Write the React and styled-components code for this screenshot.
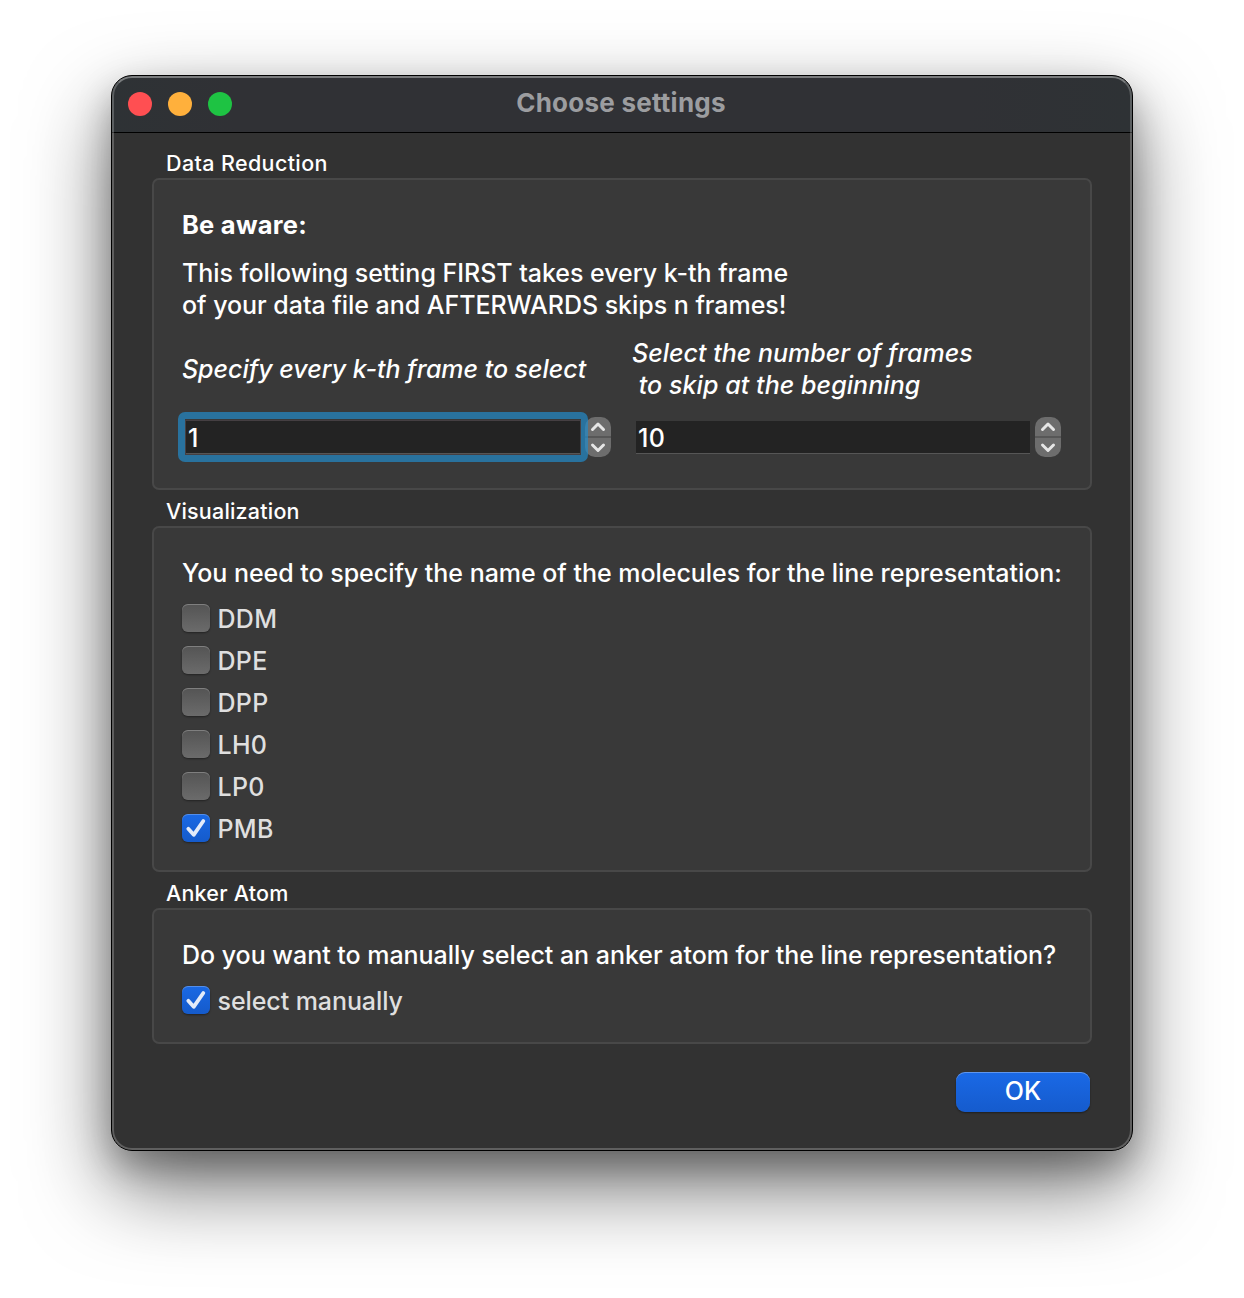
import React from "react";
import styled, { createGlobalStyle } from "styled-components";

const Global = createGlobalStyle`
  * { box-sizing: border-box; }
  html, body { margin: 0; background: #fff; }
  body { font-family: Inter, "Liberation Sans", sans-serif; }
`;

const Desktop = styled.main`
  width: 1244px;
  height: 1298px;
  padding: 75px 111px;
  overflow: hidden;
`;

const Shadow = styled.div`
  border-radius: 21px;
  width: 1022px;
  box-shadow: 0 36px 84px rgba(0, 0, 0, 0.55), 0 16px 34px rgba(0, 0, 0, 0.26);
`;
const Window = styled.section`
  position: relative;
  width: 1022px;
  height: 1076px;
  display: flex;
  flex-direction: column;
  border: 1px solid #000;
  border-radius: 21px;
  overflow: hidden;
  background: #323232;
`;
const Rim = styled.div`
  position: absolute;
  inset: 0;
  border: 2px solid rgba(255, 255, 255, 0.22);
  border-top-color: rgba(255, 255, 255, 0.36);
  border-radius: 20px;
  pointer-events: none;
`;

const TitleBar = styled.header`
  height: 57px;
  flex: none;
  display: grid;
  grid-template-columns: 1fr auto 1fr;
  align-items: center;
  padding: 0 16px;
  border-bottom: 1px solid #000;
  background: linear-gradient(90deg, #2e3235, #303135 12%, #303135 84%, #2e3235);
`;
const Lights = styled.div`
  display: flex;
  gap: 16px;
`;
const Light = styled.i`
  width: 24px;
  height: 24px;
  border-radius: 50%;
  background: ${(p) => p.$color};
`;

const Line = styled.span`
  display: block;
  width: max-content;
  white-space: pre;
  font-size: ${(p) => p.$size || 25}px;
  line-height: ${(p) => p.$lh || 32}px;
  font-weight: ${(p) => p.$weight || 500};
  letter-spacing: ${(p) => p.$ls || 0}px;
  color: ${(p) => p.$color || "#fff"};
`;
const Title = styled(Line)`
  padding: 0 2px 2px 0;
`;
const Hint = styled(Line)`
  font-style: italic;
`;

const Body = styled.div`
  flex: 1;
  padding: 14px 40px 0;
`;
const Caption = styled.h2`
  margin: 0;
  height: 31px;
  padding: 0 14px;
`;
const Group = styled.div`
  height: ${(p) => p.$h}px;
  margin-bottom: 5px;
  padding: 29px 28px;
  border: 2px solid #484848;
  border-radius: 7px;
  background: #393939;
`;
const Message = styled.div`
  padding-top: 16px;
`;
const Fields = styled.div`
  display: grid;
  grid-template-columns: 430px 430px;
  column-gap: 20px;
  padding-top: 16px;
`;
const Label = styled.div`
  height: 64px;
  display: flex;
  flex-direction: column;
  justify-content: center;
`;
const Spin = styled.div`
  display: flex;
  align-items: center;
  height: 48px;
  margin-top: 12px;
`;
const Input = styled.div`
  position: relative;
  width: 394px;
  height: 33px;
  margin: 1px 5px 0 4px;
  padding: 1px 0 0 2px;
  background: #232323;
  border-bottom: 1px solid #565656;
  box-shadow: ${(p) => (p.$focus ? "0 0 0 1px #453f42" : "none")};
  &::before {
    content: "";
    display: ${(p) => (p.$focus ? "block" : "none")};
    position: absolute;
    z-index: 1;
    inset: -9px -8px -9px -8px;
    border: 7px solid rgba(34, 138, 201, 0.7);
    border-radius: 7px;
  }
`;
const Stepper = styled.svg`
  display: block;
`;
const Choices = styled.div`
  padding-top: 8px;
`;
const Choice = styled.div`
  display: flex;
  align-items: center;
  gap: 7.5px;
  height: 42px;
`;
const ChoiceLabel = styled(Line)`
  padding-top: 2px;
`;
const Box = styled.span`
  width: 28px;
  height: 28px;
  border-radius: 6px;
  display: grid;
  background: ${(p) => (p.$on ? "linear-gradient(#1a69e4, #155bcb)" : "linear-gradient(#545454, #6b6b6b)")};
  box-shadow: inset 0 1px 0 rgba(255, 255, 255, 0.25), 0 1px 2px rgba(0, 0, 0, 0.4);
`;
const Footer = styled.footer`
  display: flex;
  justify-content: flex-end;
  padding: 23px 2px 0;
`;
const OkButton = styled.button`
  width: 134px;
  height: 40px;
  padding: 0 0 2px;
  border: 0;
  border-radius: 9px;
  display: grid;
  place-items: center;
  font-family: inherit;
  background: linear-gradient(#1a69e6, #155bcd);
  box-shadow: inset 0 1px 0 rgba(255, 255, 255, 0.3), 0 1px 2px rgba(0, 0, 0, 0.4);
`;

const molecules = ["DDM", "DPE", "DPP", "LH0", "LP0", "PMB"];

function Steps() {
  return (
    <Stepper width="26" height="40" viewBox="0 0 26 40">
      <rect width="26" height="40" rx="10" fill="#6d6d6d" />
      <path d="M0 20h26" stroke="#575757" strokeWidth="2" />
      <path d="M7.5 12.5l5.5-5.5 5.5 5.5M7.5 28l5.5 5.5 5.5-5.5" fill="none" stroke="#e6e6e6" strokeWidth="3" strokeLinecap="round" strokeLinejoin="round" />
    </Stepper>
  );
}

function Check({ label, on, ls }) {
  return (
    <Choice>
      <Box $on={on}>
        {on && (
          <svg width="28" height="28" viewBox="0 0 28 28">
            <path d="M6.3 14.8l5.4 6L21.3 7" fill="none" stroke="#e3ebf9" strokeWidth="3.8" strokeLinecap="round" strokeLinejoin="round" />
          </svg>
        )}
      </Box>
      <ChoiceLabel $color="#dfdfdf" $ls={ls}>{label}</ChoiceLabel>
    </Choice>
  );
}

export default function App() {
  return (
    <>
      <Global />
      <Desktop>
        <Shadow>
          <Window>
            <TitleBar>
              <Lights>
                <Light $color="#ff4f52" />
                <Light $color="#ffb03c" />
                <Light $color="#1ec343" />
              </Lights>
              <Title $size={26} $weight={700} $ls={0.25} $color="#9c9da0">Choose settings</Title>
            </TitleBar>
            <Body>
              <Caption><Line $size={21.5} $ls={0.37}>Data Reduction</Line></Caption>
              <Group $h={312}>
                <Line $size={25.5} $weight={700} $ls={0.25}>Be aware:</Line>
                <Message>
                  <Line $ls={-0.03}>This following setting FIRST takes every k-th frame</Line>
                  <Line $ls={-0.04}>of your data file and AFTERWARDS skips n frames!</Line>
                </Message>
                <Fields>
                  <Label><Hint $ls={-0.03}>Specify every k-th frame to select</Hint></Label>
                  <Label>
                    <Hint $ls={0.01}>Select the number of frames</Hint>
                    <Hint $ls={0.06}> to skip at the beginning</Hint>
                  </Label>
                  <Spin><Input $focus><Line>1</Line></Input><Steps /></Spin>
                  <Spin><Input><Line $ls={0.4}>10</Line></Input><Steps /></Spin>
                </Fields>
              </Group>
              <Caption><Line $size={21.5} $ls={0.2}>Visualization</Line></Caption>
              <Group $h={346}>
                <Line $ls={-0.03}>You need to specify the name of the molecules for the line representation:</Line>
                <Choices>
                  {molecules.map((n) => <Check key={n} label={n} on={n === "PMB"} ls={0.3} />)}
                </Choices>
              </Group>
              <Caption><Line $size={21.5} $ls={0.22}>Anker Atom</Line></Caption>
              <Group $h={136}>
                <Line $ls={-0.03}>Do you want to manually select an anker atom for the line representation?</Line>
                <Choices><Check label="select manually" on ls={-0.08} /></Choices>
              </Group>
              <Footer><OkButton><Line $lh={36}>OK</Line></OkButton></Footer>
            </Body>
            <Rim />
          </Window>
        </Shadow>
      </Desktop>
    </>
  );
}
